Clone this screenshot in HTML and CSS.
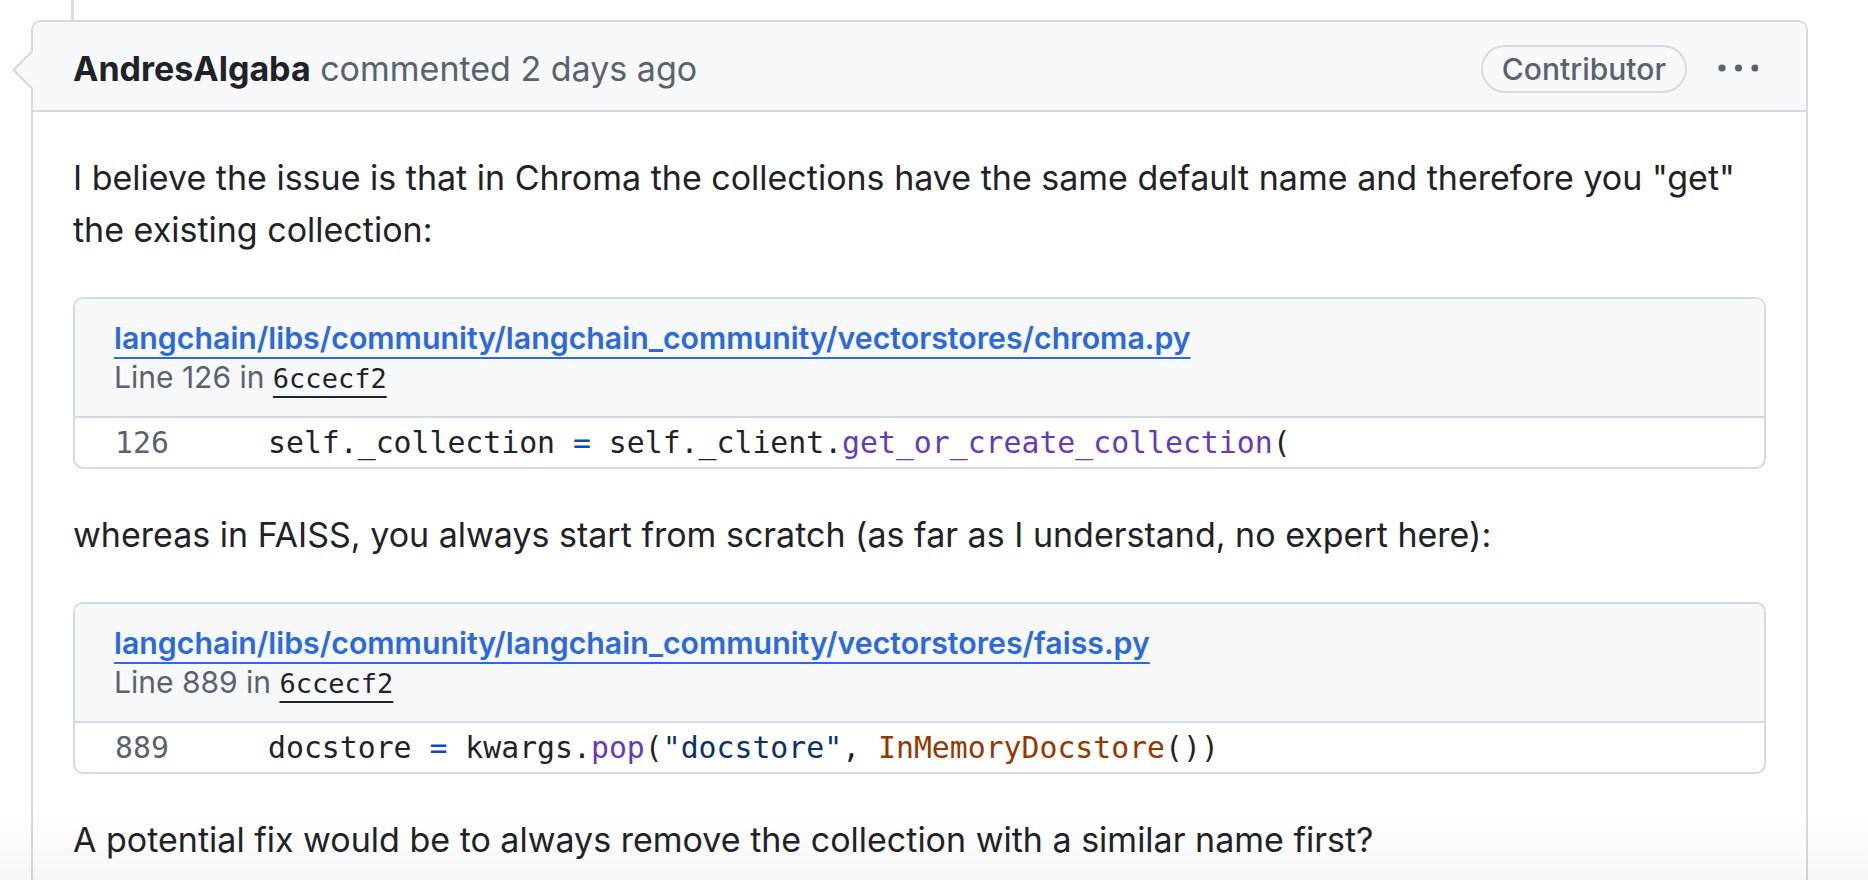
FILE: index.html
```html
<!DOCTYPE html>
<html lang="en">
<head>
<meta charset="utf-8">
<title>Comment</title>
<link rel="stylesheet" href="styles.css">
</head>
<body>
<div class="timeline">
  <div class="rail"></div>
  <div class="comment">
    <div class="comment-header">
      <h3 class="comment-title"><strong class="author">AndresAlgaba</strong> commented 2 days ago</h3>
      <div class="header-actions">
        <span class="badge">Contributor</span>
        <button class="more" aria-label="Show options">
          <svg width="40" height="10" viewBox="0 0 40 10"><circle cx="4" cy="5" r="3.6"/><circle cx="20.5" cy="5" r="3.6"/><circle cx="37" cy="5" r="3.6"/></svg>
        </button>
      </div>
    </div>
    <div class="comment-body">
      <p>I believe the issue is that in Chroma the collections have the same default name and therefore you "get" the existing collection:</p>
      <div class="embed">
        <div class="embed-head">
          <a class="embed-link" href="#">langchain/libs/community/langchain_community/vectorstores/chroma.py</a>
          <div class="embed-meta">Line 126 in <a class="sha" href="#">6ccecf2</a></div>
        </div>
        <div class="embed-code">
          <span class="ln">126</span>
          <code class="code">self._collection <span class="k">=</span> self._client.<span class="fn">get_or_create_collection</span>(</code>
        </div>
      </div>
      <p>whereas in FAISS, you always start from scratch (as far as I understand, no expert here):</p>
      <div class="embed">
        <div class="embed-head">
          <a class="embed-link" href="#">langchain/libs/community/langchain_community/vectorstores/faiss.py</a>
          <div class="embed-meta">Line 889 in <a class="sha" href="#">6ccecf2</a></div>
        </div>
        <div class="embed-code">
          <span class="ln">889</span>
          <code class="code">docstore <span class="k">=</span> kwargs.<span class="fn">pop</span>(<span class="str">"docstore"</span>, <span class="cls">InMemoryDocstore</span>())</code>
        </div>
      </div>
      <p>A potential fix would be to always remove the collection with a similar name first?</p>
    </div>
  </div>
</div>
<div class="shade"></div>
</body>
</html>
```

FILE: styles.css
```css
* { box-sizing: border-box; }
html, body { margin: 0; padding: 0; background: #ffffff; }
body {
  font-family: Inter, "Noto Sans", "Liberation Sans", sans-serif;
  color: #1f2328;
  height: 880px;
  overflow: hidden;
  position: relative;
}
.timeline { display: flex; flex-direction: column; }
.rail {
  width: 3px;
  height: 20px;
  margin-left: 71px;
  background: #d8dee4;
}
.comment {
  position: relative;
  margin: 0 60px 0 31px;
  border: 2px solid #d5dae0;
  border-bottom: none;
  border-radius: 10px 10px 0 0;
  height: 900px;
}
.comment::before,
.comment::after {
  content: "";
  position: absolute;
  top: 29px;
  width: 0;
  height: 0;
  border-style: solid;
  border-color: transparent;
  border-width: 19px 19px 19px 0;
}
.comment::before { left: -21px; border-right-color: #d5dae0; }
.comment::after { left: -18px; border-right-color: #f6f8fa; }
.comment-header {
  display: flex;
  align-items: center;
  justify-content: space-between;
  height: 90px;
  padding: 5px 48px 0 40px;
  background: #f6f8fa;
  border-bottom: 2px solid #d5dae0;
  border-radius: 8px 8px 0 0;
}
.comment-title {
  margin: 0;
  font-size: 34px;
  font-weight: 400;
  color: #59636e;
}
.author { color: #1f2328; font-weight: 700; }
.header-actions { display: flex; align-items: center; gap: 31px; }
.badge {
  display: inline-flex;
  align-items: center;
  height: 48px;
  padding: 0 19px;
  border: 2px solid #d5dae0;
  border-radius: 24px;
  font-size: 30px;
  font-weight: 500;
  color: #59636e;
}
.more {
  display: flex;
  padding: 0;
  border: 0;
  background: transparent;
  margin-top: -2px;
}
.more svg { fill: #59636e; display: block; }
.comment-body { padding: 40px 40px 0 40px; }
.comment-body p {
  margin: 0;
  font-size: 34px;
  line-height: 52px;
}
.embed {
  margin: 41px 0 40px;
  border: 2px solid #d5dae0;
  border-radius: 10px;
  overflow: hidden;
}
.embed-head {
  background: #f6f8fa;
  border-bottom: 2px solid #d5dae0;
  padding: 20px 40px 17px 39px;
}
.embed-link {
  display: inline-block;
  font-size: 30.3px;
  line-height: 38px;
  font-weight: 600;
  color: #2d6ad8;
  text-decoration: underline;
  text-decoration-thickness: 2px;
  text-underline-offset: 8px;
}
.embed-meta {
  font-size: 30px;
  line-height: 40px;
  color: #59636e;
}
.sha {
  font-family: "DejaVu Sans Mono", "Liberation Mono", monospace;
  font-size: 27px;
  color: #1f2328;
  text-decoration: underline;
  text-decoration-thickness: 2px;
  text-underline-offset: 8px;
}
.embed-code {
  display: grid;
  grid-template-columns: 193px 1fr;
  height: 49px;
  font-family: "DejaVu Sans Mono", "Liberation Mono", monospace;
  font-size: 29.8px;
  line-height: 49px;
  white-space: pre;
}
.ln { padding-left: 40px; color: #59636e; }
.code { font-family: inherit; color: #1f2328; }
.k { color: #0550ae; }
.fn { color: #6639ba; }
.str { color: #0a3069; }
.cls { color: #953800; }
.shade {
  position: absolute;
  left: 0;
  right: 0;
  bottom: 0;
  height: 70px;
  background: linear-gradient(to bottom, rgba(0,0,0,0), rgba(0,0,0,0.035));
  pointer-events: none;
}
```
